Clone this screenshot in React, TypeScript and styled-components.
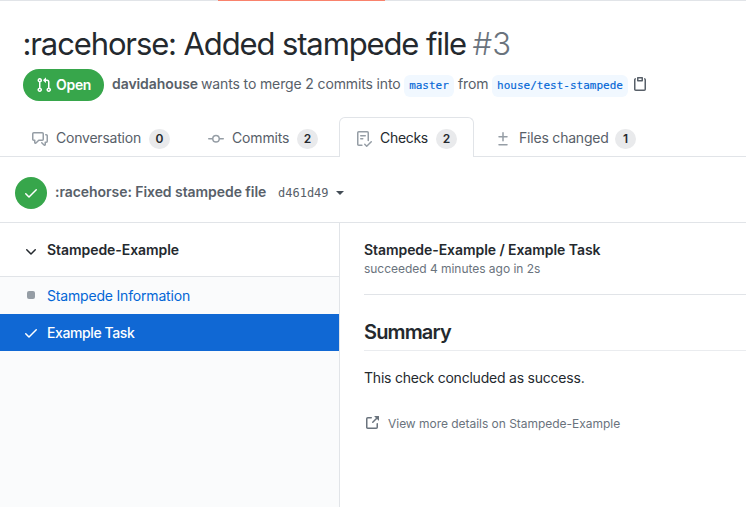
import React from "react";
import styled, { createGlobalStyle, css } from "styled-components";

const GlobalStyle = createGlobalStyle`
  * { box-sizing: border-box; }
  body {
    margin: 0;
    overflow: hidden;
    background: #fff;
    color: #24292e;
    font-family: Inter, "Liberation Sans", sans-serif;
    font-size: 14px;
    line-height: 20px;
  }
`;

const mono = css`
  font-family: "DejaVu Sans Mono", "Liberation Mono", monospace;
`;

const Page = styled.div`
  height: 507px;
  display: flex;
  flex-direction: column;
  overflow: hidden;
`;

const TopNavEdge = styled.div`
  height: 1px;
  flex: none;
  display: flex;
  background: #e1e4e8;
`;

const ActiveNavMarker = styled.div`
  width: 167px;
  margin-left: 218px;
  background: #f9826c;
`;

const Text = styled.span<{ $w?: number; $ls?: number; $weight?: number; $color?: string }>`
  flex: none;
  white-space: nowrap;
  width: ${(p) => (p.$w ? `${p.$w}px` : "auto")};
  letter-spacing: ${(p) => p.$ls ?? 0}px;
  font-weight: ${(p) => p.$weight ?? 400};
  color: ${(p) => p.$color ?? "inherit"};
`;

const Title = styled.h1`
  display: flex;
  flex: none;
  margin: 25px 0 0 22.5px;
  height: 36px;
  font-size: 31px;
  line-height: 35px;
  font-weight: 400;
`;

const Meta = styled.div`
  display: flex;
  flex: none;
  align-items: center;
  height: 32px;
  margin: 7px 0 0 23px;
  color: #586069;
`;

const MetaText = styled(Text)`
  margin-top: -2px;
`;

const StateBadge = styled.span`
  display: flex;
  align-items: center;
  width: 81px;
  height: 32px;
  padding-left: 13px;
  margin-right: 8px;
  gap: 4px;
  border-radius: 16px;
  background: #37a64b;
  color: #fff;
`;

const Branch = styled.span<{ $w: number }>`
  ${mono}
  width: ${(p) => p.$w}px;
  height: 22px;
  margin: 1px 4px 0;
  border-radius: 6px;
  background: #f1f8ff;
  color: #0366d6;
  font-size: 11px;
  line-height: 21px;
  text-align: center;
  -webkit-text-stroke: 0.15px #0366d6;
`;

const Tabs = styled.nav`
  display: flex;
  flex: none;
  height: 40px;
  margin-top: 16px;
  padding-left: 15px;
  box-shadow: inset 0 -1px #e1e4e8;
`;

const Tab = styled.div<{ $w: number; $active?: boolean }>`
  display: flex;
  align-items: center;
  flex: none;
  width: ${(p) => p.$w}px;
  padding: 3px 0 0 16px;
  gap: 8px;
  border: 1px solid transparent;
  border-bottom: 0;
  color: #586069;
  ${(p) =>
    p.$active &&
    css`
      margin-right: 4px;
      border-color: #e1e4e8;
      border-radius: 6px 6px 0 0;
      background: #fff;
      color: #24292e;
    `}
`;

const Counter = styled.span`
  width: 21px;
  height: 20px;
  border-radius: 10px;
  background: #e9eaec;
  color: #24292e;
  font-size: 12px;
  font-weight: 600;
  line-height: 20px;
  text-align: center;
`;

const CommitBar = styled.div`
  display: flex;
  align-items: center;
  flex: none;
  height: 66px;
  padding: 6px 0 0 15px;
  border-bottom: 1px solid #e1e4e8;
  color: #586069;
`;

const SuccessCircle = styled.span`
  display: flex;
  align-items: center;
  justify-content: center;
  width: 32px;
  height: 32px;
  margin-right: 8px;
  border-radius: 50%;
  background: #37a64b;
  color: #fff;
`;

const Sha = styled.span`
  ${mono}
  width: 58px;
  margin-left: 12px;
  font-size: 12px;
`;

const Caret = styled.span`
  border: 4px solid transparent;
  border-top-color: #444d56;
  border-bottom: 0;
`;

const Body = styled.main`
  display: grid;
  grid-template-columns: 340px 1fr;
  flex: 1;
`;

const Sidebar = styled.aside`
  border-right: 1px solid #e1e4e8;
  background: #fafbfc;
`;

const SuiteHeader = styled.div`
  display: flex;
  align-items: center;
  height: 54px;
  padding: 0 0 0 23px;
  gap: 8px;
  border-bottom: 1px solid #e1e4e8;
  background: #fff;
`;

const CheckRow = styled.div<{ $selected?: boolean }>`
  display: flex;
  align-items: center;
  height: 37px;
  padding-left: 23px;
  gap: 8px;
  color: ${(p) => (p.$selected ? "#fff" : "#0366d6")};
  background: ${(p) => (p.$selected ? "#1068d4" : "transparent")};
`;

const NeutralSlot = styled.span`
  display: flex;
  justify-content: center;
  width: 16px;
  padding-bottom: 2px;
`;

const NeutralMark = styled.span`
  width: 8px;
  height: 8px;
  border-radius: 2px;
  background: #959da5;
`;

const Detail = styled.section`
  padding: 17px 0 0 24px;
`;

const DetailHeader = styled.header`
  display: flex;
  flex-direction: column;
  height: 55px;
  border-bottom: 1px solid #e1e4e8;
`;

const Small = styled(Text)`
  font-size: 12px;
  line-height: 18px;
`;

const LinkLabel = styled(Small)`
  margin-top: 2px;
`;

const SummaryTitle = styled.h2`
  display: flex;
  height: 32px;
  margin: 24px 0 0;
  border-bottom: 1px solid #eaecef;
  font-size: 20px;
  line-height: 26px;
`;

const Paragraph = styled.p`
  display: flex;
  margin: 17px 0 0;
`;

const DetailsLink = styled.a`
  display: flex;
  align-items: center;
  margin-top: 25px;
  gap: 8px;
  color: #6a737d;
`;

const Svg = styled.svg<{ $dy?: number }>`
  flex: none;
  fill: currentColor;
  margin-top: ${(p) => p.$dy ?? 0}px;
`;

const PATHS = {
  pull: "M7.177 3.073L9.573.677A.25.25 0 0110 .854v4.792a.25.25 0 01-.427.177L7.177 3.427a.25.25 0 010-.354zM3.75 2.5a.75.75 0 100 1.5.75.75 0 000-1.5zm-2.25.75a2.25 2.25 0 113 2.122v5.256a2.251 2.251 0 11-1.5 0V5.372A2.25 2.25 0 011.5 3.25zM11 2.5h-1V4h1a1 1 0 011 1v5.628a2.251 2.251 0 101.5 0V5A2.5 2.5 0 0011 2.5zm1 10.25a.75.75 0 111.5 0 .75.75 0 01-1.5 0zM3.75 12a.75.75 0 100 1.5.75.75 0 000-1.5z",
  discussion:
    "M1.5 2.75a.25.25 0 01.25-.25h8.5a.25.25 0 01.25.25v5.5a.25.25 0 01-.25.25h-3.5a.75.75 0 00-.53.22L3.5 11.44V9.25a.75.75 0 00-.75-.75h-1a.25.25 0 01-.25-.25v-5.5zM1.75 1A1.75 1.75 0 000 2.75v5.5C0 9.216.784 10 1.75 10H2v1.543a1.457 1.457 0 002.487 1.03L7.061 10h3.189A1.75 1.75 0 0012 8.25v-5.5A1.75 1.75 0 0010.25 1h-8.5zM14.5 4.75a.25.25 0 00-.25-.25h-.5a.75.75 0 110-1.5h.5c.966 0 1.75.784 1.75 1.75v5.5A1.75 1.75 0 0114.25 12H14v1.543a1.457 1.457 0 01-2.487 1.03L9.22 12.28a.75.75 0 111.06-1.06l2.22 2.22v-2.19a.75.75 0 01.75-.75h1a.25.25 0 00.25-.25v-5.5z",
  commit:
    "M10.5 7.75a2.5 2.5 0 11-5 0 2.5 2.5 0 015 0zm1.43.75a4.002 4.002 0 01-7.86 0H.75a.75.75 0 110-1.5h3.32a4.001 4.001 0 017.86 0h3.32a.75.75 0 110 1.5h-3.32z",
  checklist:
    "M2.5 1.75a.25.25 0 01.25-.25h8.5a.25.25 0 01.25.25v7.736a.75.75 0 101.5 0V1.75A1.75 1.75 0 0011.25 0h-8.5A1.75 1.75 0 001 1.75v11.5c0 .966.784 1.75 1.75 1.75h3.17a.75.75 0 000-1.5H2.75a.25.25 0 01-.25-.25V1.75zM4.75 4a.75.75 0 000 1.5h4.5a.75.75 0 000-1.5h-4.5zM4 7.75A.75.75 0 014.75 7h2a.75.75 0 010 1.5h-2A.75.75 0 014 7.75zm11.774 3.537a.75.75 0 00-1.048-1.074L10.7 14.145 9.281 12.72a.75.75 0 00-1.062 1.058l1.943 1.95a.75.75 0 001.055.008l4.557-4.45z",
  diff: "M8.75 1.75a.75.75 0 00-1.5 0V5H4a.75.75 0 000 1.5h3.25v3.25a.75.75 0 001.5 0V6.5H12A.75.75 0 0012 5H8.75V1.75zM4 13a.75.75 0 000 1.5h8a.75.75 0 100-1.5H4z",
  check:
    "M13.78 4.22a.75.75 0 010 1.06l-7.25 7.25a.75.75 0 01-1.06 0L2.22 9.28a.75.75 0 011.06-1.06L6 10.94l6.72-6.72a.75.75 0 011.06 0z",
  clippy:
    "M5.75 1a.75.75 0 00-.75.75v3c0 .414.336.75.75.75h4.5a.75.75 0 00.75-.75v-3a.75.75 0 00-.75-.75h-4.5zm.75 3V2.5h3V4h-3zm-2.874-.467a.75.75 0 00-.752-1.298A1.75 1.75 0 002 3.75v9.5c0 .966.784 1.75 1.75 1.75h8.5A1.75 1.75 0 0014 13.25v-9.5a1.75 1.75 0 00-.874-1.515.75.75 0 10-.752 1.298.25.25 0 01.126.217v9.5a.25.25 0 01-.25.25h-8.5a.25.25 0 01-.25-.25v-9.5a.25.25 0 01.126-.217z",
  chevron:
    "M12.78 6.22a.75.75 0 010 1.06l-4.25 4.25a.75.75 0 01-1.06 0L3.22 7.28a.75.75 0 011.06-1.06L8 9.94l3.72-3.72a.75.75 0 011.06 0z",
  external:
    "M10.604 1h4.146a.25.25 0 01.25.25v4.146a.25.25 0 01-.427.177L13.03 4.03 9.28 7.78a.75.75 0 01-1.06-1.06l3.75-3.75-1.543-1.543A.25.25 0 0110.604 1zM3.75 2A1.75 1.75 0 002 3.75v8.5c0 .966.784 1.75 1.75 1.75h8.5A1.75 1.75 0 0014 12.25v-3.5a.75.75 0 00-1.5 0v3.5a.25.25 0 01-.25.25h-8.5a.25.25 0 01-.25-.25v-8.5a.25.25 0 01.25-.25h3.5a.75.75 0 000-1.5h-3.5z",
};

function Icon({ name, color, dy }: { name: keyof typeof PATHS; color?: string; dy?: number }) {
  return (
    <Svg width={16} height={16} viewBox="0 0 16 16" color={color} $dy={dy}>
      <path fillRule="evenodd" d={PATHS[name]} />
    </Svg>
  );
}

const TABS: { icon: keyof typeof PATHS; label: string; count: number; w: number; tw: number; ls: number; active?: boolean }[] = [
  { icon: "discussion", label: "Conversation", count: 0, w: 176, tw: 85, ls: -0.22 },
  { icon: "commit", label: "Commits", count: 2, w: 148, tw: 57, ls: -0.15 },
  { icon: "checklist", label: "Checks", count: 2, w: 135, tw: 48, ls: -0.3, active: true },
  { icon: "diff", label: "Files changed", count: 1, w: 180, tw: 88, ls: -0.2 },
];

export default function App() {
  return (
    <Page>
      <GlobalStyle />
      <TopNavEdge>
        <ActiveNavMarker />
      </TopNavEdge>
      <Title>
        <Text $w={450} $ls={-1.12}>:racehorse: Added stampede file</Text>
        <Text $color="#6a737d" $weight={300} $ls={0}>#3</Text>
      </Title>
      <Meta>
        <StateBadge>
          <Icon name="pull" />
          <Text $weight={600} $ls={-0.3}>Open</Text>
        </StateBadge>
        <MetaText $w={89} $weight={600} $ls={-0.08}>davidahouse</MetaText>
        <MetaText $w={199} $ls={-0.13}>wants to merge 2 commits into</MetaText>
        <Branch $w={50}>master</Branch>
        <MetaText $w={30} $ls={-0.1}>from</MetaText>
        <Branch $w={136}>house/test-stampede</Branch>
        <Icon name="clippy" dy={-2} />
      </Meta>
      <Tabs>
        {TABS.map((t) => (
          <Tab key={t.label} $w={t.w} $active={t.active}>
            <Icon name={t.icon} color="#959da5" dy={-1} />
            <MetaText $w={t.tw} $ls={t.ls}>{t.label}</MetaText>
            <Counter>{t.count}</Counter>
          </Tab>
        ))}
      </Tabs>
      <CommitBar>
        <SuccessCircle>
          <Icon name="check" />
        </SuccessCircle>
        <MetaText $w={211} $weight={600} $ls={-0.06}>:racehorse: Fixed stampede file</MetaText>
        <Sha>d461d49</Sha>
        <Caret />
      </CommitBar>
      <Body>
        <Sidebar>
          <SuiteHeader>
            <Icon name="chevron" dy={2} />
            <Text $weight={600} $ls={-0.06}>Stampede-Example</Text>
          </SuiteHeader>
          <CheckRow>
            <NeutralSlot>
              <NeutralMark />
            </NeutralSlot>
            <Text $ls={-0.18}>Stampede Information</Text>
          </CheckRow>
          <CheckRow $selected>
            <Icon name="check" />
            <Text $weight={500} $ls={-0.4}>Example Task</Text>
          </CheckRow>
        </Sidebar>
        <Detail>
          <DetailHeader>
            <Text $weight={600} $ls={-0.07}>Stampede-Example / Example Task</Text>
            <Small $color="#6a737d" $ls={-0.03}>succeeded 4 minutes ago in 2s</Small>
          </DetailHeader>
          <SummaryTitle>
            <Text $weight={600} $ls={-0.85}>Summary</Text>
          </SummaryTitle>
          <Paragraph>
            <Text $ls={-0.22}>This check concluded as success.</Text>
          </Paragraph>
          <DetailsLink>
            <Icon name="external" />
            <LinkLabel $ls={-0.03}>View more details on Stampede-Example</LinkLabel>
          </DetailsLink>
        </Detail>
      </Body>
    </Page>
  );
}
